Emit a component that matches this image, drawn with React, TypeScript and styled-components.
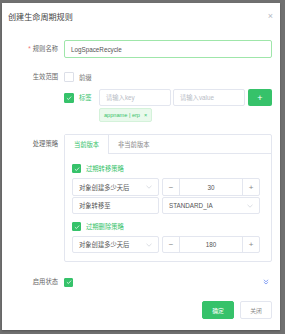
import React from 'react'
import styled, { createGlobalStyle } from 'styled-components'

const GREEN = '#36c26a'
const BORDER = '#e3e6ef'

const GlobalStyle = createGlobalStyle`
  html, body {
    margin: 0;
    padding: 0;
    background: #707070;
    overflow: hidden;
  }
  * { box-sizing: border-box; }
  body {
    font-family: "Liberation Sans", "Noto Sans CJK SC", sans-serif;
  }
`

const Overlay = styled.div`
  width: 285px;
  height: 334px;
  padding: 3px 5px 4px 2px;
`

const Modal = styled.div`
  width: 278px;
  height: 327px;
  background: #fff;
  box-shadow: 0 1px 2px rgba(0, 0, 0, 0.25);
  display: flex;
  flex-direction: column;
`

const Header = styled.div`
  height: 26px;
  padding: 0 7px 0 6px;
  display: flex;
  align-items: center;
  justify-content: space-between;
`

const Title = styled.div`
  font-size: 8.1px;
  color: #444;
`

const Close = styled.div`
  font-size: 9px;
  color: #b4b8c4;
  line-height: 1;
`

const Body = styled.div`
  padding-right: 8px;
  display: flex;
  flex-direction: column;
`

const Row = styled.div<{ $top: number; $h?: number }>`
  display: flex;
  align-items: ${(p) => (p.$h ? 'center' : 'flex-start')};
  margin-top: ${(p) => p.$top}px;
  min-height: ${(p) => p.$h ?? 0}px;
`

const Label = styled.div<{ $required?: boolean; $h?: number }>`
  width: 56px;
  flex-shrink: 0;
  margin-right: 6px;
  text-align: right;
  font-size: 6.3px;
  color: #666;
  line-height: ${(p) => p.$h ?? 10}px;
  &::before {
    content: ${(p) => (p.$required ? "'*'" : "''")};
    color: #f27070;
    margin-right: 2px;
  }
`

const Control = styled.div`
  flex: 1;
  display: flex;
  flex-direction: column;
`

const TextInput = styled.div<{ $focus?: boolean; $w?: number; $h?: number; $muted?: boolean }>`
  height: ${(p) => p.$h ?? 18}px;
  width: ${(p) => (p.$w ? `${p.$w}px` : 'auto')};
  flex: ${(p) => (p.$w ? 'none' : '1')};
  border: 1px solid ${(p) => (p.$focus ? '#9fe6aa' : BORDER)};
  border-radius: 2px;
  padding: 0 6px;
  display: flex;
  align-items: center;
  justify-content: space-between;
  font-size: 6.3px;
  color: ${(p) => (p.$muted ? '#b8bcc6' : '#555')};
  background: #fff;
`

const CheckRow = styled.div<{ $top?: number }>`
  display: flex;
  align-items: center;
  gap: 5px;
  margin-top: ${(p) => p.$top ?? 0}px;
`

const Box = styled.div<{ $on?: boolean; $size?: number }>`
  width: ${(p) => p.$size ?? 10}px;
  height: ${(p) => p.$size ?? 10}px;
  border-radius: 1px;
  border: 1px solid ${(p) => (p.$on ? GREEN : '#dcdfe8')};
  background: ${(p) => (p.$on ? GREEN : '#fff')};
  display: flex;
  align-items: center;
  justify-content: center;
  flex-shrink: 0;
`

const CheckText = styled.span<{ $on?: boolean }>`
  font-size: 6.3px;
  color: ${(p) => (p.$on ? GREEN : '#777')};
`

const TagLine = styled.div`
  display: flex;
  align-items: center;
  margin-top: 7px;
`

const TagCheck = styled(CheckRow)`
  width: 35px;
  flex-shrink: 0;
`

const Inputs = styled.div`
  flex: 1;
  display: flex;
  gap: 2px;
  align-items: center;
`

const AddButton = styled.div`
  width: 24px;
  height: 17px;
  margin-left: 1px;
  background: ${GREEN};
  border-radius: 2px;
  color: #fff;
  font-size: 9px;
  display: flex;
  align-items: center;
  justify-content: center;
`

const Chip = styled.div`
  margin: 2px 0 0 35px;
  align-self: flex-start;
  height: 14px;
  padding: 0 4px;
  display: flex;
  align-items: center;
  gap: 4px;
  background: #e9f9ec;
  border: 1px solid #d4f2da;
  border-radius: 2px;
  color: ${GREEN};
  font-size: 5.6px;
`

const TabsBox = styled.div`
  border: 1px solid ${BORDER};
  border-radius: 2px;
  height: 128px;
`

const TabBar = styled.div`
  display: flex;
  height: 19px;
  border-bottom: 1px solid ${BORDER};
`

const Tab = styled.div<{ $active?: boolean }>`
  width: ${(p) => (p.$active ? '44px' : 'auto')};
  padding: ${(p) => (p.$active ? '0' : '0 0 0 9px')};
  display: flex;
  align-items: center;
  justify-content: ${(p) => (p.$active ? 'center' : 'flex-start')};
  font-size: 6.3px;
  color: ${(p) => (p.$active ? GREEN : '#888')};
  background: #fff;
  border-right: ${(p) => (p.$active ? `1px solid ${BORDER}` : 'none')};
  margin-bottom: ${(p) => (p.$active ? '-1px' : '0')};
`

const TabContent = styled.div`
  padding: 10px 11px 0 7px;
  display: flex;
  flex-direction: column;
`

const PolicyRow = styled.div<{ $top: number; $h: number }>`
  display: flex;
  gap: 3px;
  margin-top: ${(p) => p.$top}px;
  height: ${(p) => p.$h}px;
`

const NumberBox = styled.div`
  width: 98px;
  flex-shrink: 0;
  display: flex;
  border: 1px solid ${BORDER};
  border-radius: 2px;
  font-size: 6.3px;
  color: #555;
`

const Step = styled.div<{ $side: 'left' | 'right' }>`
  width: 17px;
  display: flex;
  align-items: center;
  justify-content: center;
  color: #888;
  font-size: 8px;
  ${(p) => (p.$side === 'left' ? `border-right: 1px solid ${BORDER};` : `border-left: 1px solid ${BORDER};`)}
`

const NumValue = styled.div`
  flex: 1;
  display: flex;
  align-items: center;
  justify-content: center;
`

const StatusRow = styled.div`
  display: flex;
  align-items: center;
  margin-top: 15px;
  height: 10px;
`

const Expand = styled.div`
  margin-left: auto;
  margin-right: 3px;
  display: flex;
`

const Footer = styled.div`
  display: flex;
  justify-content: flex-end;
  gap: 6px;
  padding-right: 8px;
  margin-top: 14px;
`

const Button = styled.div<{ $primary?: boolean }>`
  width: 32px;
  height: 18px;
  border-radius: 2px;
  display: flex;
  align-items: center;
  justify-content: center;
  font-size: 5.8px;
  background: ${(p) => (p.$primary ? GREEN : '#fff')};
  color: ${(p) => (p.$primary ? '#fff' : '#888')};
  border: 1px solid ${(p) => (p.$primary ? GREEN : BORDER)};
`

const Tick = ({ size = 6 }: { size?: number }) => (
  <svg width={size} height={size} viewBox="0 0 10 10">
    <path d="M1.5 5.2 L4 7.6 L8.6 2.6" fill="none" stroke="#fff" strokeWidth="1.2" />
  </svg>
)

const Chevron = () => (
  <svg width="6" height="4" viewBox="0 0 6 4">
    <path d="M0.5 0.8 L3 3.2 L5.5 0.8" fill="none" stroke="#c4c8d2" strokeWidth="0.6" />
  </svg>
)

const Select = ({ text, w, h }: { text: string; w?: number; h?: number }) => (
  <TextInput $w={w} $h={h}>
    <span>{text}</span>
    <Chevron />
  </TextInput>
)

const NumberInput = ({ value }: { value: string }) => (
  <NumberBox>
    <Step $side="left">−</Step>
    <NumValue>{value}</NumValue>
    <Step $side="right">+</Step>
  </NumberBox>
)

const Checked = ({ label, top }: { label: string; top?: number }) => (
  <CheckRow $top={top}>
    <Box $on $size={9}>
      <Tick size={6} />
    </Box>
    <CheckText $on>{label}</CheckText>
  </CheckRow>
)

export default function App() {
  return (
    <>
      <GlobalStyle />
      <Overlay>
        <Modal>
          <Header>
            <Title>创建生命周期规则</Title>
            <Close>×</Close>
          </Header>
          <Body>
            <Row $top={11} $h={18}>
              <Label $required $h={18}>规则名称</Label>
              <TextInput $focus>LogSpaceRecycle</TextInput>
            </Row>

            <Row $top={14}>
              <Label>生效范围</Label>
              <Control>
                <CheckRow>
                  <Box />
                  <CheckText>前缀</CheckText>
                </CheckRow>
                <TagLine>
                  <TagCheck>
                    <Box $on>
                      <Tick />
                    </Box>
                    <CheckText $on>标签</CheckText>
                  </TagCheck>
                  <Inputs>
                    <TextInput $h={17} $muted>请输入key</TextInput>
                    <TextInput $h={17} $muted>请输入value</TextInput>
                    <AddButton>+</AddButton>
                  </Inputs>
                </TagLine>
                <Chip>
                  <span>appname | erp</span>
                  <span>×</span>
                </Chip>
              </Control>
            </Row>

            <Row $top={12}>
              <Label $h={19}>处理策略</Label>
              <Control>
                <TabsBox>
                  <TabBar>
                    <Tab $active>当前版本</Tab>
                    <Tab>非当前版本</Tab>
                  </TabBar>
                  <TabContent>
                    <Checked label="过期转移策略" />
                    <PolicyRow $top={5} $h={18}>
                      <Select text="对象创建多少天后" h={18} />
                      <NumberInput value="30" />
                    </PolicyRow>
                    <PolicyRow $top={1} $h={17}>
                      <TextInput $h={17}>对象转移至</TextInput>
                      <Select text="STANDARD_IA" w={98} h={17} />
                    </PolicyRow>
                    <Checked label="过期删除策略" top={8} />
                    <PolicyRow $top={5} $h={17}>
                      <Select text="对象创建多少天后" h={17} />
                      <NumberInput value="180" />
                    </PolicyRow>
                  </TabContent>
                </TabsBox>
              </Control>
            </Row>

            <StatusRow>
              <Label>启用状态</Label>
              <Box $on $size={9}>
                <Tick size={6} />
              </Box>
              <Expand>
                <svg width="6" height="6" viewBox="0 0 6 6">
                  <path d="M0.8 0.8 L3 2.8 L5.2 0.8 M0.8 3 L3 5 L5.2 3" fill="none" stroke="#7f9cf5" strokeWidth="0.9" />
                </svg>
              </Expand>
            </StatusRow>
          </Body>
          <Footer>
            <Button $primary>确定</Button>
            <Button>关闭</Button>
          </Footer>
        </Modal>
      </Overlay>
    </>
  )
}
